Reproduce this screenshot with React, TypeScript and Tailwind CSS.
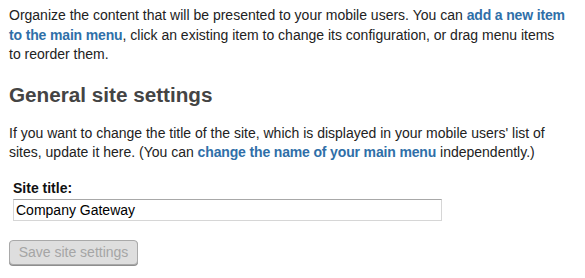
import React from "react";

function Link({ children }: { children: React.ReactNode }) {
  return (
    <a href="#" className="font-bold tracking-[-0.15px] text-[#2f6fa8] no-underline">
      {children}
    </a>
  );
}

export default function App() {
  return (
    <div className="min-h-screen bg-white pt-[6px] pl-[9px] font-['Liberation_Sans',Arial,sans-serif] text-[14px] leading-[19.5px] text-[#222]">
      <div className="w-[558px]">
        <p>
          Organize the content that will be presented to your mobile users. You can{" "}
          <Link>add a new item to the main menu</Link>, click an existing item to change its configuration, or drag menu
          items to reorder them.
        </p>

        <h2 className="mt-[17px] text-[20.7px] leading-[25px] font-bold text-[#444]">General site settings</h2>

        <p className="mt-[17px]">
          If you want to change the title of the site, which is displayed in your mobile users' list of sites, update it
          here. (You can <Link>change the name of your main menu</Link> independently.)
        </p>

        <form className="mt-[16px] ml-[4px]" onSubmit={(e) => e.preventDefault()}>
          <label className="block font-bold text-[#111]">Site title:</label>
          <input
            type="text"
            defaultValue="Company Gateway"
            className="mt-[1px] block h-[22px] w-[429px] border border-[#d6d6d6] border-t-[#a8a8a8] bg-white px-[2px] text-[14px] text-black outline-none"
          />
          <button
            type="submit"
            disabled
            className="mt-[19px] -ml-[4px] h-[25px] w-[129px] rounded-[4px] border border-[#a9a9a9] bg-[#dedede] text-[14px] text-[#a5a5a5] shadow-[0_1px_0_#8e8e8e]"
          >
            Save site settings
          </button>
        </form>
      </div>
    </div>
  );
}
